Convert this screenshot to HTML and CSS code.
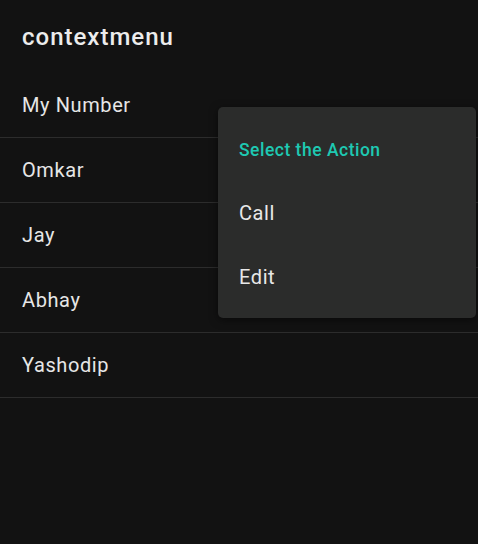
FILE: index.html
```html
<!DOCTYPE html>
<html>
<head>
<meta charset="utf-8">
<link rel="stylesheet" href="styles.css">
</head>
<body>
<div class="screen">
  <header class="appbar">contextmenu</header>
  <ul class="list">
    <li class="row">My Number</li>
    <li class="row">Omkar</li>
    <li class="row">Jay</li>
    <li class="row">Abhay</li>
    <li class="row">Yashodip</li>
  </ul>
  <div class="menu">
    <div class="menu-title">Select the Action</div>
    <div class="menu-item">Call</div>
    <div class="menu-item">Edit</div>
  </div>
</div>
</body>
</html>
```
FILE: styles.css
```css
html, body {
  margin: 0;
  padding: 0;
  background: #121212;
}
.screen {
  position: relative;
  width: 478px;
  height: 544px;
  background: #121212;
  font-family: Roboto, "Liberation Sans", sans-serif;
  color: #e6e6e6;
  overflow: hidden;
}
.appbar {
  height: 73px;
  box-sizing: border-box;
  padding: 22px 0 0 22px;
  font-size: 24px;
  font-weight: 500;
  letter-spacing: 1px;
  color: #ececec;
  line-height: 30px;
}
.list {
  list-style: none;
  margin: 0;
  padding: 0;
}
.row {
  height: 65px;
  box-sizing: border-box;
  padding-left: 22px;
  display: flex;
  align-items: center;
  font-size: 20px;
  letter-spacing: 0.6px;
  border-bottom: 1px solid #2c2c2c;
}
.menu {
  position: absolute;
  left: 218px;
  top: 107px;
  width: 258px;
  height: 211px;
  background: #2b2c2b;
  border-radius: 5px;
  box-shadow: 0 2px 8px rgba(0,0,0,0.5);
  box-sizing: border-box;
  padding-left: 21px;
}
.menu-title {
  color: #1ec9b2;
  font-size: 17.5px;
  font-weight: 500;
  letter-spacing: 0.5px;
  height: 42px;
  padding-top: 32px;
  line-height: 22px;
}
.menu-item {
  height: 64px;
  display: flex;
  align-items: center;
  font-size: 20px;
  letter-spacing: 0.6px;
  color: #e8e8e8;
}
```
